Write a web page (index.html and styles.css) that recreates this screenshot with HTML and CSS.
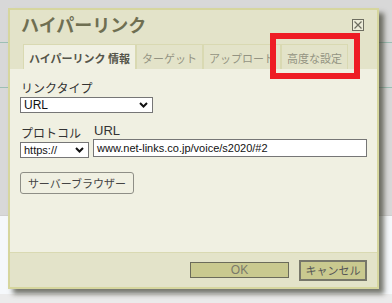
FILE: index.html
```html
<!DOCTYPE html>
<html lang="ja">
<head>
  <meta charset="UTF-8">
  <meta name="viewport" content="width=device-width, initial-scale=1.0">
  <title>ハイパーリンク</title>
  <link rel="stylesheet" href="styles.css">
</head>
<body>
  <div class="dialog">
    <div class="titlebar">
      <div class="title-row">
        <h1 class="title">ハイパーリンク</h1>
        <span class="close">
          <svg width="12" height="12" viewBox="0 0 12 12">
            <rect x="0.5" y="0.5" width="11" height="11" fill="#ebebd8" stroke="#6d6d60"/>
            <path d="M2.5 2.5 L9.5 9.5 M9.5 2.5 L2.5 9.5" stroke="#6d6d60" stroke-width="1.2"/>
          </svg>
        </span>
      </div>
      <div class="tabs">
        <div class="tab active">ハイパーリンク 情報</div>
        <div class="tab">ターゲット</div>
        <div class="tab">アップロード</div>
        <div class="tab">高度な設定</div>
      </div>
    </div>

    <div class="content">
      <div class="field">
        <div class="label">リンクタイプ</div>
        <div class="select wide">
          <span>URL</span>
          <svg width="9" height="6" viewBox="0 0 9 6"><path d="M1 1 L4.5 4.5 L8 1" fill="none" stroke="#111" stroke-width="2"/></svg>
        </div>
      </div>

      <div class="row">
        <div class="col protocol">
          <div class="label">プロトコル</div>
          <div class="select">
            <span>https://</span>
            <svg width="9" height="6" viewBox="0 0 9 6"><path d="M1 1 L4.5 4.5 L8 1" fill="none" stroke="#111" stroke-width="2"/></svg>
          </div>
        </div>
        <div class="col url">
          <div class="label latin">URL</div>
          <div class="input">www.net-links.co.jp/voice/s2020/#2</div>
        </div>
      </div>

      <button class="browse">サーバーブラウザー</button>
    </div>

    <div class="footer">
      <button class="btn ok">OK</button>
      <button class="btn cancel">キャンセル</button>
    </div>
  </div>

  <div class="highlight"></div>
</body>
</html>
```

FILE: styles.css
```css
:root {
  --frame: #d6d69e;
  --bar-bg: #e3e3c9;
  --panel-bg: #f0f0e2;
  --tab-line: #d9d9b2;
  --title-color: #6f6f52;
  --btn-bg: #c9c98f;
  --jp: "Noto Sans CJK JP", sans-serif;
  --latin: "Liberation Sans", "Noto Sans CJK JP", sans-serif;
}

html, body {
  height: 100%;
}

body {
  margin: 0;
  padding: 8px 0 0 8px;
  box-sizing: border-box;
  font-family: var(--jp);
  background:
    linear-gradient(#9dbfb5, #9dbfb5) no-repeat 0 42px / 100% 1px,
    linear-gradient(#9dbfb5, #9dbfb5) no-repeat 0 87px / 100% 1px,
    linear-gradient(#cfcfcf, #cfcfcf) no-repeat 0 215px / 100% 1px,
    linear-gradient(#f5f8fb, #f5f8fb) no-repeat 0 216px / 100% 78px,
    linear-gradient(#ebebeb, #ebebeb) no-repeat 0 294px / 100% 9px,
    #d8d8d8;
  overflow: hidden;
}

.dialog {
  width: 371px;
  height: 281px;
  box-sizing: border-box;
  border: 2px solid var(--frame);
  background: var(--panel-bg);
  box-shadow: 5px 5px 5px rgba(50, 50, 35, 0.65);
  display: flex;
  flex-direction: column;
}

.titlebar {
  background: var(--bar-bg);
  padding: 0 13px 0 13px;
}

.title-row {
  height: 34px;
  display: flex;
  justify-content: space-between;
  align-items: flex-start;
}

.title {
  margin: 1px 0 0 -2px;
  font-size: 18px;
  line-height: 26px;
  font-weight: bold;
  color: var(--title-color);
}

.close {
  display: block;
  width: 12px;
  height: 12px;
  margin-top: 9px;
}

.close svg {
  display: block;
}

.tabs {
  display: flex;
  height: 25px;
}

.tab {
  box-sizing: border-box;
  height: 25px;
  padding: 3px 5px 0;
  border: 1px solid var(--tab-line);
  border-bottom: none;
  font-size: 11px;
  line-height: 21px;
  color: #939382;
  white-space: nowrap;
}

.tab.active {
  background: var(--panel-bg);
  color: #55554a;
  font-weight: bold;
}

.content {
  flex: 1;
  padding: 11px 10px 0;
  border-bottom: 1px solid var(--tab-line);
}

.label {
  font-size: 12px;
  line-height: 16px;
  color: #333;
  padding-left: 1px;
}

.label.latin {
  font-family: var(--latin);
  font-size: 13px;
}

.select {
  box-sizing: border-box;
  height: 16px;
  margin-top: 1px;
  border: 1px solid #767676;
  background: #fff;
  display: flex;
  align-items: center;
  justify-content: space-between;
  padding: 0 4px 0 3px;
  font-family: var(--latin);
  font-size: 11px;
  color: #111;
}

.select.wide {
  width: 133px;
  font-size: 12px;
}

.select svg {
  display: block;
}

.row {
  display: flex;
  gap: 4px;
  margin-top: 12px;
}

.protocol {
  width: 69px;
}

.protocol .select {
  width: 69px;
}

.url {
  width: 274px;
  margin-top: -2px;
}

.input {
  box-sizing: border-box;
  height: 18px;
  border: 1px solid #767676;
  background: #fff;
  padding: 0 3px;
  font-family: var(--latin);
  font-size: 11px;
  line-height: 16px;
  color: #111;
  white-space: nowrap;
  overflow: hidden;
}

.browse {
  display: block;
  margin-top: 14px;
  width: 114px;
  height: 22px;
  padding: 0;
  border: 1px solid #8e8e86;
  border-radius: 3px;
  background: var(--panel-bg);
  font-family: var(--jp);
  font-size: 11px;
  color: #444;
}

.footer {
  height: 34px;
  background: var(--bar-bg);
  display: flex;
  justify-content: flex-end;
  align-items: center;
  gap: 10px;
  padding-right: 10px;
}

.btn {
  padding: 0;
  background: var(--btn-bg);
  font-family: var(--jp);
  font-size: 11px;
  color: #555;
}

.ok {
  width: 99px;
  height: 16px;
  border: 1px solid #6b6b5a;
  line-height: 14px;
  color: #7a7a6a;
  font-family: var(--latin);
  font-size: 12px;
}

.cancel {
  width: 68px;
  height: 21px;
  border: 2px solid #77776a;
}

.highlight {
  position: absolute;
  left: 270px;
  top: 33px;
  width: 90px;
  height: 46px;
  box-sizing: border-box;
  border: 6px solid #ee1c24;
}
```
